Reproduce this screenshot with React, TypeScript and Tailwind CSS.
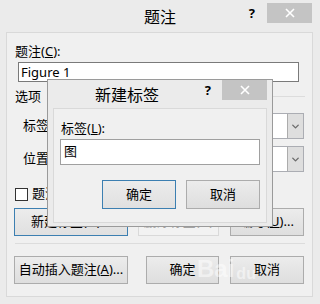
import React from 'react';
import { ChevronDown } from 'lucide-react';

const font = { fontFamily: '"Noto Sans", "Noto Sans CJK SC", sans-serif' };

function CloseButton() {
  return (
    <div className="w-[45px] h-[20px] bg-[#c4c4c4] flex items-center justify-center">
      <svg width="10" height="10" viewBox="0 0 10 10">
        <path d="M1 1 L9 9 M9 1 L1 9" stroke="#ffffff" strokeWidth="1.6" />
      </svg>
    </div>
  );
}

function Combo() {
  return (
    <div className="w-[234px] h-[26px] bg-white border border-[#abadb3] flex justify-end">
      <div className="w-[16px] h-full bg-[#dedede] border-l border-[#acacac] flex items-center justify-center">
        <ChevronDown size={11} strokeWidth={3} color="#6b6b6b" />
      </div>
    </div>
  );
}

function Btn({ children, w, focus, disabled }: { children: React.ReactNode; w: string; focus?: boolean; disabled?: boolean }) {
  return (
    <div
      className={`${w} h-[28px] flex items-center justify-center text-[13px] border ${
        focus
          ? 'border-[#3c7fb1] bg-gradient-to-b from-[#ececec] to-[#e0e0e0]'
          : disabled
          ? 'border-[#d9d9d9] bg-[#f2f2f2] text-[#a3a3a3]'
          : 'border-[#acacac] bg-gradient-to-b from-[#ececec] to-[#dedede]'
      }`}
    >
      {children}
    </div>
  );
}

export default function App() {
  return (
    <div className="relative w-[320px] h-[304px] overflow-hidden bg-[#ebebeb] text-black" style={font}>
      {/* outer window: title bar */}
      <div className="h-[32px] grid grid-cols-[1fr_auto_1fr] items-start">
        <div />
        <div className="text-[16px] leading-[20px] mt-[7px]">题注</div>
        <div className="flex justify-end items-start pr-[8px] pt-[3px]">
          <span className="text-[13px] font-bold leading-[16px] mt-[2px] mr-[12px]">?</span>
          <CloseButton />
        </div>
      </div>

      {/* outer window: content panel */}
      <div className="ml-[6px] w-[307px] h-[265px] border border-[#d9d9d9] bg-[#f0f0f0] flex flex-col text-[13px]">
        <div className="pl-[8px] pt-[9px] leading-[18px]">
          题注(<span className="underline">C</span>):
        </div>
        <div className="ml-[11px] mt-[2px] w-[281px] h-[20px] bg-white border border-[#7a7a7a] px-[2px] leading-[18px]">
          Figure 1
        </div>
        <div className="mt-[5px] pl-[8px] pr-[7px] flex items-center gap-[6px] leading-[18px]">
          <span>选项</span>
          <div className="flex-1 h-px bg-[#dcdcdc]" />
        </div>
        <div className="mt-[8px] pl-[16px] pr-[8px] flex items-center justify-between">
          <span>标签</span>
          <Combo />
        </div>
        <div className="mt-[7px] pl-[16px] pr-[8px] flex items-center justify-between">
          <span>位置</span>
          <Combo />
        </div>
        <div className="mt-[14px] h-[16px] pl-[8px] flex items-center gap-[4px]">
          <div className="w-[13px] h-[13px] bg-white border border-[#333333]" />
          <span>题注中不包含标签(E)</span>
        </div>
        <div className="mt-[6px] pl-[7px] flex">
          <Btn w="w-[114px]" focus>新建标签(N)...</Btn>
          <div className="ml-[10px]">
            <Btn w="w-[81px]" disabled>删除标签(D)</Btn>
          </div>
          <div className="ml-[11px]">
            <Btn w="w-[74px]">编号(<span className="underline">U</span>)...</Btn>
          </div>
        </div>
        <div className="mt-[7px] ml-[8px] mr-[7px] h-px bg-[#dcdcdc]" />
        <div className="mt-[12px] pl-[7px] flex">
          <Btn w="w-[114px]">
            自动插入题注(<span className="underline">A</span>)...
          </Btn>
          <div className="ml-[18px]">
            <Btn w="w-[73px]">确定</Btn>
          </div>
          <div className="ml-[11px]">
            <Btn w="w-[74px]">取消</Btn>
          </div>
        </div>
      </div>

      {/* inner modal dialog */}
      <div className="absolute left-[47px] top-[79px] w-[226px] h-[148px] border border-[#9a9a9a] bg-[#ebebeb] flex flex-col">
        <div className="h-[28px] flex items-start">
          <span className="ml-[47px] mt-[5px] text-[16px] leading-[20px]">新建标签</span>
          <div className="flex-1" />
          <span className="text-[13px] font-bold leading-[16px] mt-[2px] mr-[11px]">?</span>
          <div className="mr-[5px]">
            <CloseButton />
          </div>
        </div>
        <div className="mx-[5px] h-[115px] border border-[#d9d9d9] bg-[#f0f0f0] flex flex-col text-[13px]">
          <div className="pl-[7px] pt-[10px] leading-[18px]">
            标签(<span className="underline">L</span>):
          </div>
          <div className="mx-[6px] mt-[2px] h-[26px] bg-white border border-[#a0a0a0] px-[3px] flex items-center">
            图
          </div>
          <div className="mt-[15px] pr-[6px] flex justify-end gap-[10px]">
            <div className="w-[74px] h-[29px] flex items-center justify-center border border-[#3c7fb1] bg-gradient-to-b from-[#ececec] to-[#e0e0e0]">
              确定
            </div>
            <div className="w-[74px] h-[29px] flex items-center justify-center border border-[#acacac] bg-gradient-to-b from-[#ececec] to-[#dedede]">
              取消
            </div>
          </div>
        </div>
      </div>

      {/* watermark */}
      <div className="absolute left-[197px] top-[255px] text-[24px] font-bold leading-[28px] text-white/50 flex gap-[2px]" style={{ fontFamily: '"Liberation Sans", sans-serif' }}>
        <span>Bai</span>
        <span className="text-[16px] mt-[5px]">du</span>
      </div>
    </div>
  );
}
